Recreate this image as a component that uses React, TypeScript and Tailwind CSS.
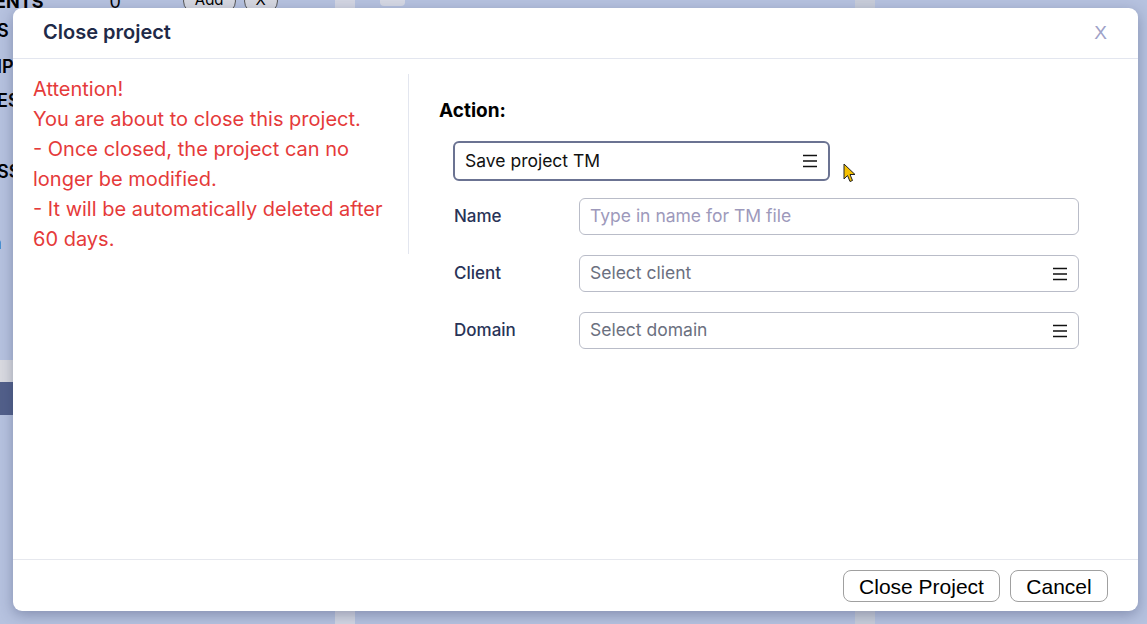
import React from "react";

function Burger() {
  return (
    <svg width="16" height="14" viewBox="0 0 16 14" className="shrink-0">
      <path d="M1 1.5h14M1 7h14M1 12.5h14" stroke="#111" strokeWidth="1.6" />
    </svg>
  );
}

function Cursor() {
  return (
    <svg width="14" height="20" viewBox="0 0 14 20" className="absolute left-[843px] top-[163px]">
      <path d="M1 1v15l3.5-3.5 2.5 6 2.5-1-2.5-6H12z" fill="#f5c000" stroke="#222" strokeWidth="1" strokeLinejoin="round" />
    </svg>
  );
}

export default function App() {
  const font = { fontFamily: "Inter, 'Noto Sans', sans-serif" };
  return (
    <div className="relative w-[1147px] h-[624px] overflow-hidden bg-[#b6c2df]" style={font}>
      {/* background page (under overlay) */}
      <div className="flex h-full">
        <div className="w-[13px] flex flex-col text-[18px] font-semibold text-black leading-[20px]">
          <div className="h-[360px] flex flex-col pt-[21px] -ml-[3px]">
            <span>S</span>
            <span className="mt-[16px]">IP</span>
            <span className="mt-[14px]">ES</span>
            <span className="mt-[51px]">SS</span>
            <span className="mt-[51px] ml-[-6px] font-normal">n</span>
          </div>
          <div className="h-[22px] bg-[#d9dae0]" />
          <div className="h-[33px] bg-[#52608a]" />
        </div>
        <div className="w-[340px] flex items-start -mt-[12px] -ml-[18px]">
          <span className="text-[18px] font-bold text-black">ENTS</span>
          <span className="text-[18px] text-black ml-[66px]">0</span>
          <div className="flex gap-[8px] ml-[62px]">
            <span className="px-[11px] h-[26px] rounded-full border border-[#555] bg-[#d6d8e0] text-[15px]">Add</span>
            <span className="px-[11px] h-[26px] rounded-full border border-[#555] bg-[#d6d8e0] text-[15px]">X</span>
          </div>
        </div>
        <div className="w-[20px] h-full bg-[#d3d6e2]" />
        <div className="w-[25px] ml-[25px] h-[6px] rounded-b bg-[#d6d9e4]" />
        <div className="flex-1" />
        <div className="w-[20px] h-full bg-[#c8cdd9] mr-[272px]" />
      </div>

      {/* modal */}
      <div className="absolute left-[13px] top-[8px] w-[1125px] h-[603px] bg-white rounded-[9px] shadow-[0_4px_14px_rgba(40,50,90,0.35)] flex flex-col">
        <div className="h-[51px] flex items-center justify-between pl-[30px] pr-[31px] pb-[3px] border-b border-[#e3e6ef]">
          <span className="text-[20px] font-semibold text-[#1f2a48]">Close project</span>
          <span className="text-[19px] font-light text-[#9ea2c8] mt-[4px]" style={{ fontFamily: "'Liberation Sans', Arial, sans-serif" }}>X</span>
        </div>
        <div className="flex-1 flex items-start pt-[15px]">
          <div className="w-[396px] pl-[20px] pr-[20px] border-r border-[#e3e6ef] text-[20px] leading-[30px] text-[#e53a3a]">
            <div>Attention!</div>
            <div>You are about to close this project.</div>
            <div>- Once closed, the project can no longer be modified.</div>
            <div>- It will be automatically deleted after 60 days.</div>
          </div>
          <div className="flex-1 pl-[30px] pt-[22px]">
            <div className="text-[19px] font-bold text-black leading-[30px]">Action:</div>
            <div className="ml-[14px] mt-[15px] w-[377px] h-[40px] rounded-[6px] border-2 border-[#6b7392] flex items-center justify-between pl-[10px] pr-[10px]">
              <span className="text-[17.5px] text-[#111]">Save project TM</span>
              <Burger />
            </div>
            <div className="ml-[15px] mt-[17px] flex flex-col gap-[20px]">
              <div className="flex items-center">
                <span className="w-[125px] text-[17px] font-medium text-[#283357]">Name</span>
                <div className="w-[500px] h-[37px] rounded-[6px] border border-[#b9bcc8] flex items-center px-[10px]">
                  <span className="text-[17.5px] text-[#9d99bb]">Type in name for TM file</span>
                </div>
              </div>
              <div className="flex items-center">
                <span className="w-[125px] text-[17px] font-medium text-[#283357]">Client</span>
                <div className="w-[500px] h-[37px] rounded-[6px] border border-[#b9bcc8] flex items-center justify-between px-[10px]">
                  <span className="text-[17.5px] text-[#6b7080]">Select client</span>
                  <Burger />
                </div>
              </div>
              <div className="flex items-center">
                <span className="w-[125px] text-[17px] font-medium text-[#283357]">Domain</span>
                <div className="w-[500px] h-[37px] rounded-[6px] border border-[#b9bcc8] flex items-center justify-between px-[10px]">
                  <span className="text-[17.5px] text-[#6b7080]">Select domain</span>
                  <Burger />
                </div>
              </div>
            </div>
          </div>
        </div>
        <div className="h-[52px] border-t border-[#e6e8ee] flex items-start justify-end gap-[10px] pt-[10px] pr-[30px]" style={{ fontFamily: "'Liberation Sans', Arial, sans-serif" }}>
          <button className="h-[32px] w-[157px] rounded-[8px] border border-[#a0a0a0] bg-white text-[21px] text-black">Close Project</button>
          <button className="h-[32px] w-[98px] rounded-[8px] border border-[#a0a0a0] bg-white text-[21px] text-black">Cancel</button>
        </div>
      </div>
      <Cursor />
    </div>
  );
}
